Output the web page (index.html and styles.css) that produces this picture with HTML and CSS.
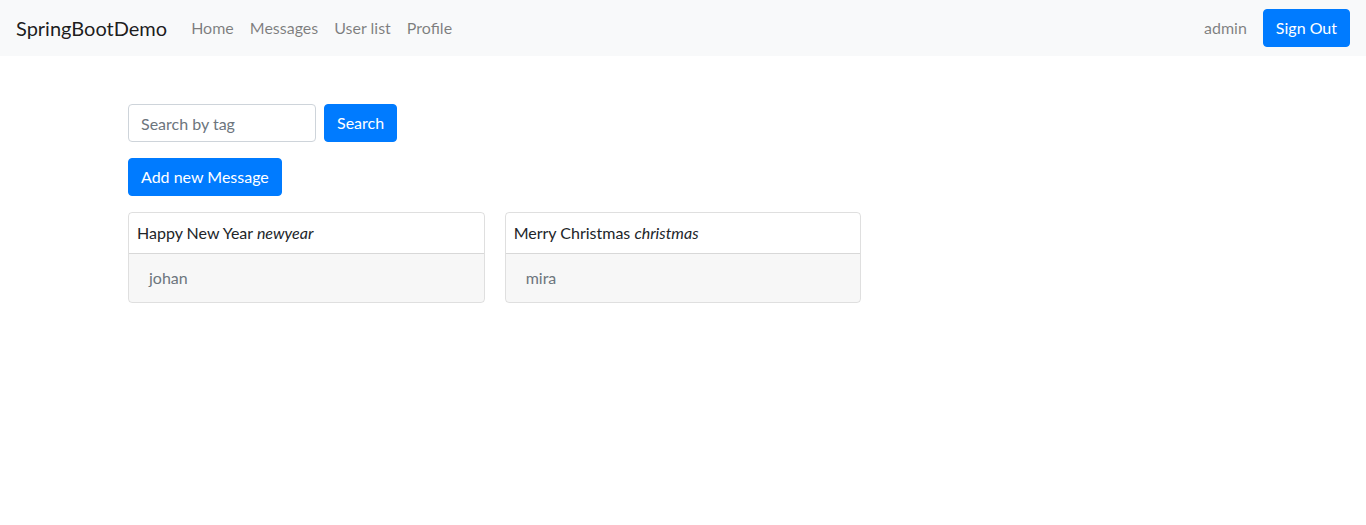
FILE: index.html
```html
<!DOCTYPE html>
<html lang="en">
<head>
<meta charset="utf-8">
<title>SpringBootDemo</title>
<link rel="stylesheet" href="styles.css">
</head>
<body>
<nav class="navbar">
  <a class="brand" href="#">SpringBootDemo</a>
  <ul class="nav">
    <li><a class="nav-link" href="#">Home</a></li>
    <li><a class="nav-link" href="#">Messages</a></li>
    <li><a class="nav-link" href="#">User list</a></li>
    <li><a class="nav-link" href="#">Profile</a></li>
  </ul>
  <div class="navbar-text">admin</div>
  <button class="btn btn-primary" type="button">Sign Out</button>
</nav>
<main class="container">
  <form class="form-inline">
    <input class="form-control" type="text" placeholder="Search by tag">
    <button class="btn btn-primary" type="submit">Search</button>
  </form>
  <a class="btn btn-primary add-btn" href="#">Add new Message</a>
  <div class="card-columns">
    <div class="card">
      <div class="card-body"><span>Happy New Year</span> <i>newyear</i></div>
      <div class="card-footer">johan</div>
    </div>
    <div class="card">
      <div class="card-body"><span>Merry Christmas</span> <i>christmas</i></div>
      <div class="card-footer">mira</div>
    </div>
  </div>
</main>
</body>
</html>
```
FILE: styles.css
```css
* { box-sizing: border-box; }
html, body { margin: 0; }
body {
  font-family: "Lato", "Open Sans", sans-serif;
  font-size: 16px;
  line-height: 24px;
  color: #212529;
  background: #fff;
}
a { text-decoration: none; }
.navbar {
  display: flex;
  align-items: center;
  height: 56px;
  padding: 8px 16px;
  background: #f8f9fa;
}
.brand {
  font-size: 20px;
  line-height: 30px;
  color: rgba(0,0,0,.9);
  margin-right: 16px;
  padding: 5px 0;
}
.nav {
  display: flex;
  list-style: none;
  margin: 0;
  padding: 0;
}
.nav-link {
  display: block;
  padding: 8px;
  color: rgba(0,0,0,.5);
}
.navbar-text {
  margin-left: auto;
  margin-right: 16px;
  color: rgba(0,0,0,.5);
}
.btn {
  display: inline-block;
  font-family: inherit;
  font-size: 16px;
  line-height: 24px;
  padding: 6px 12px;
  border: 1px solid transparent;
  border-radius: 4px;
  cursor: pointer;
}
.btn-primary {
  color: #fff;
  background: #007bff;
  border-color: #007bff;
}
.container {
  max-width: 1140px;
  margin: 48px auto 0;
  padding: 0 15px;
}
.form-inline {
  display: flex;
  align-items: center;
  gap: 8px;
  margin: 0 0 16px;
}
.form-control {
  width: 188px;
  height: 38px;
  padding: 6px 12px;
  font-family: inherit;
  font-size: 16px;
  line-height: 24px;
  color: #495057;
  border: 1px solid #ced4da;
  border-radius: 4px;
}
.form-control::placeholder { color: #6c757d; }
.add-btn { margin-bottom: 16px; }
.card-columns {
  display: grid;
  grid-template-columns: repeat(3, 1fr);
  column-gap: 20px;
  align-items: start;
}
.card {
  border: 1px solid rgba(0,0,0,.125);
  border-radius: 4px;
  overflow: hidden;
}
.card-body {
  margin: 8px;
}
.card-footer {
  padding: 12px 20px;
  background: rgba(0,0,0,.03);
  border-top: 1px solid rgba(0,0,0,.125);
  color: #6c757d;
}
```
